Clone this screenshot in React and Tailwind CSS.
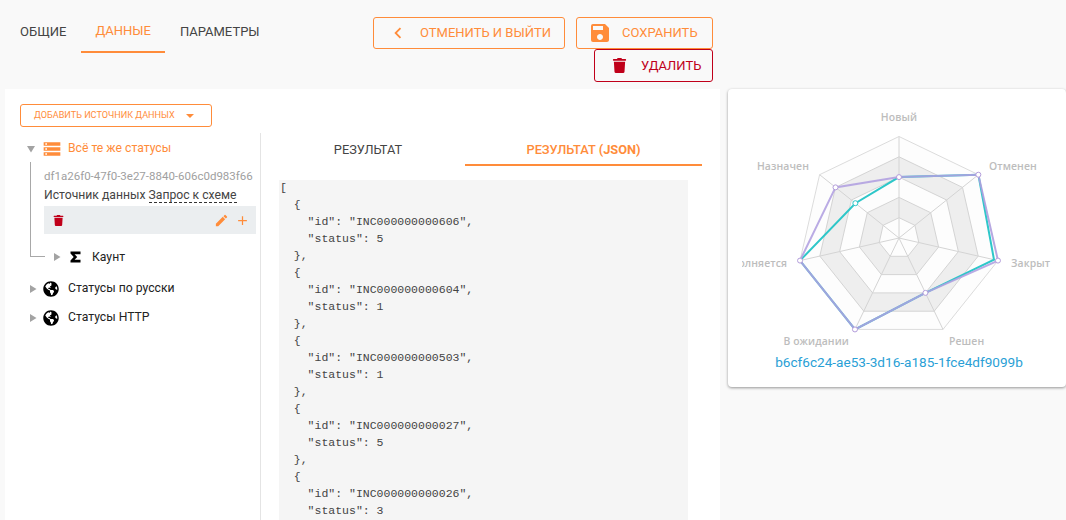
import React from "react";
import { MdStorage, MdSave, MdChevronLeft, MdEdit, MdAdd } from "react-icons/md";
import { FaTrash, FaGlobeAmericas } from "react-icons/fa";

const Tri = ({ down }) => (
  <svg width="10" height="10" viewBox="0 0 10 10" className="shrink-0">
    {down ? <path d="M1 2h8L5 8.5z" fill="#a3a3a3" /> : <path d="M2 1v8l6.5-4z" fill="#a3a3a3" />}
  </svg>
);

const Sigma = () => (
  <svg width="11" height="12" viewBox="0 0 11 12" className="shrink-0">
    <path d="M0.5 0.5H10.5V3.2H4.6L7.2 6 4.6 8.8H10.5V11.5H0.5V9.6L3.7 6 0.5 2.4z" fill="#000" />
  </svg>
);

const cx = 157, cy = 149, R = 101.5;
const pt = (k, f) => {
  const a = (k * 2 * Math.PI) / 7;
  return [cx + R * f * Math.sin(a), cy - R * f * Math.cos(a)];
};
const poly = (vals) => vals.map((f, k) => pt(k, f).map((n) => n.toFixed(1)).join(",")).join(" ");
const ring = (f) => poly(Array(7).fill(f));
const purple = [0.6, 1, 1, 0.6, 1, 1, 0.8];
const teal = [0.6, 1, 0.96, 0.6, 1, 1, 0.55];
const labels = [
  ["Новый", 157, 32, "middle"],
  ["Отменен", 247, 81, "start"],
  ["Закрыт", 269, 178, "start"],
  ["Решен", 207, 256, "start"],
  ["В ожидании", 107, 256, "end"],
  ["Выполняется", 45, 178, "end"],
  ["Назначен", 67, 81, "end"],
];

const Radar = () => (
  <svg width="314" height="265" viewBox="0 0 314 265" className="block">
    <polygon points={ring(1)} fill="#fdfdfd" stroke="#dcdcdc" />
    <polygon points={ring(0.8)} fill="#eeeeee" stroke="#d4d4d4" />
    <polygon points={ring(0.6)} fill="#fdfdfd" stroke="#d4d4d4" />
    <polygon points={ring(0.4)} fill="#eeeeee" stroke="#d4d4d4" />
    <polygon points={ring(0.2)} fill="#fdfdfd" stroke="#d4d4d4" />
    {[0, 1, 2, 3, 4, 5, 6].map((k) => {
      const [x, y] = pt(k, 1);
      return <line key={k} x1={cx} y1={cy} x2={x} y2={y} stroke="#d4d4d4" />;
    })}
    <polygon points={poly(teal)} fill="none" stroke="#2ec7c9" strokeWidth="2" />
    <polygon points={poly(purple)} fill="none" stroke="#b09fe0" strokeWidth="2" opacity="0.88" />
    {purple.map((f, k) => {
      const [x, y] = pt(k, f);
      return <circle key={k} cx={x} cy={y} r="2.5" fill="#fff" stroke="#b39ddb" />;
    })}
    {teal.map((f, k) => {
      const [x, y] = pt(k, f);
      return k === 6 ? <circle key={k} cx={x} cy={y} r="2.5" fill="#fff" stroke="#2ec7c9" /> : null;
    })}
    {labels.map(([t, x, y, a]) => (
      <text key={t} x={x} y={y} textAnchor={a} fontSize="10.4" letterSpacing="0.1" fill="#bdbdbd" fontWeight="600" fontFamily="'Open Sans', sans-serif">
        {t}
      </text>
    ))}
  </svg>
);

const json = `[
  {
    "id": "INC000000000606",
    "status": 5
  },
  {
    "id": "INC000000000604",
    "status": 1
  },
  {
    "id": "INC000000000503",
    "status": 1
  },
  {
    "id": "INC000000000027",
    "status": 5
  },
  {
    "id": "INC000000000026",
    "status": 3
  },`;

export default function App() {
  return (
    <div className="h-[520px] w-[1066px] overflow-hidden bg-[#f9f9f9] font-['Roboto',sans-serif] flex">
      <div className="w-[720px] shrink-0 flex flex-col">
        <div className="h-[89px] shrink-0 flex items-start">
          <div className="flex pl-[6px] w-[373px] shrink-0 h-[53px] text-[13px] uppercase leading-none">
            <div className="pl-[14px] pr-[15px] flex items-center h-[53px] pt-[10px] text-[#444]">Общие</div>
            <div className="px-[14px] flex items-center h-[53px] pt-[10px] text-[#ff8c3a] border-b-2 border-[#ff8c3a]">Данные</div>
            <div className="px-[15px] flex items-center h-[53px] pt-[10px] text-[#444]">Параметры</div>
          </div>
          <div className="w-[340px] shrink-0 mt-[17px] flex flex-wrap justify-end text-[13px]">
            <button className="uppercase w-[192px] h-[32px] border border-[#ff8c3a] rounded-[3px] text-[#ff8c3a] flex items-center pl-[13px]">
              <MdChevronLeft className="text-[22px] mr-[11px]" />
              Отменить и выйти
            </button>
            <button className="uppercase ml-[11px] w-[137px] h-[32px] border border-[#ff8c3a] rounded-[3px] text-[#ff8c3a] flex items-center pl-[11px]">
              <MdSave className="text-[24px] mr-[10px]" />
              Сохранить
            </button>
            <button className="uppercase w-[119px] h-[33px] border border-[#c0001a] rounded-[3px] text-[#c0001a] flex items-center pl-[17px]">
              <FaTrash className="text-[15px] mr-[14px]" />
              Удалить
            </button>
          </div>
        </div>
        <div className="flex-1 ml-[5px] bg-white flex flex-col min-h-0">
          <div className="h-[44px] shrink-0 pl-[15px] pt-[15px]">
            <button className="uppercase w-[192px] h-[23px] border border-[#ff8c3a] rounded-[3px] text-[#ff8c3a] text-[9.1px] flex items-center pl-[13px]">
              Добавить источник данных
              <svg width="8" height="4" viewBox="0 0 8 4" className="ml-[11px]"><path d="M0 0h8L4 4z" fill="#ff8c3a" /></svg>
            </button>
          </div>
          <div className="flex flex-1 min-h-0">
            <div className="w-[256px] shrink-0 border-r border-[#e4e4e4] pl-[21px] pr-[4px] text-[12.2px]">
              <div className="relative">
                <div className="flex items-center h-[30px] pt-[1px]">
                  <Tri down />
                  <MdStorage className="text-[#ff8c3a] text-[20px] ml-[6px] -mr-[1px]" />
                  <span className="ml-[7px] text-[#ff8c3a]">Всё те же статусы</span>
                </div>
                <div className="absolute left-[4px] top-[29px] w-[15px] h-[95px] border-l border-b border-[#a8a8a8]" />
                <div className="pl-[18px]">
                  <div className="text-[11.5px] leading-[17px] text-[#a0a0a0] pt-[5px] whitespace-nowrap">df1a26f0-47f0-3e27-8840-606c0d983f66</div>
                  <div className="leading-[20px] text-[#444]">
                    Источник данных <span className="border-b border-dashed border-[#333]">Запрос к схеме</span>
                  </div>
                  <div className="mt-[1px] h-[28px] bg-[#ebeef0] flex items-center pl-[9px] pr-[6px]">
                    <FaTrash className="text-[#c0001a] text-[11px]" />
                    <MdEdit className="ml-auto text-[#ff8c3a] text-[15px]" />
                    <MdAdd className="ml-[6px] text-[#ff8c3a] text-[15px]" />
                  </div>
                  <div className="flex items-center h-[36px] pl-[8px] text-[#222] mt-[5px]">
                    <Tri />
                    <span className="ml-[8px]"><Sigma /></span>
                    <span className="ml-[11px]">Каунт</span>
                  </div>
                </div>
                <div className="flex items-center h-[29px] mt-[-1px] pl-[2px] text-[#222]">
                  <Tri />
                  <FaGlobeAmericas className="text-[16px] text-black ml-[5px]" />
                  <span className="ml-[9px]">Статусы по русски</span>
                </div>
                <div className="flex items-center h-[29px] pl-[2px] text-[#222]">
                  <Tri />
                  <FaGlobeAmericas className="text-[16px] text-black ml-[5px]" />
                  <span className="ml-[9px]">Статусы HTTP</span>
                </div>
              </div>
            </div>
            <div className="flex-1 min-w-0 pl-[18px] pr-[18px]">
              <div className="flex h-[33px] text-[12.8px] uppercase">
                <div className="w-[186px] text-center text-[#444] pt-[7px] pr-[8px]">Результат</div>
                <div className="w-[237px] text-center text-[#ff8c3a] font-medium border-b-2 border-[#ff8c3a] pt-[7px]">Результат <span className="font-bold">(JSON)</span></div>
              </div>
              <div className="mt-[14px] w-[409px] bg-[#f5f5f5] h-[400px] overflow-hidden pl-[1px]">
                <pre className="-mt-[1px] text-[11.5px] leading-[17px] text-[#444] font-['Liberation_Mono',monospace]">{json}</pre>
              </div>
            </div>
          </div>
        </div>
      </div>
      <div className="ml-[8px] mt-[89px] w-[338px] h-[298px] bg-white rounded-[4px] shadow-[0_1px_3px_rgba(0,0,0,0.4)] pl-[14px] flex flex-col">
        <Radar />
        <div className="text-center text-[13.6px] text-[#2a9fd6] -ml-[14px] pl-[4px] leading-[16px]">b6cf6c24-ae53-3d16-a185-1fce4df9099b</div>
      </div>
    </div>
  );
}
